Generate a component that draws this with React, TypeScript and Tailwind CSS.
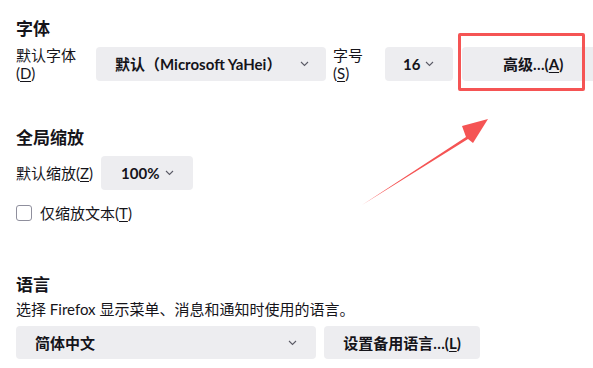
import React from 'react';

const FONT = 'Lato, "Noto Sans CJK SC", sans-serif';

// small thin dropdown chevron
const Chevron = ({ className = '' }: { className?: string }) => (
  <svg width="9" height="6" viewBox="0 0 9 6" className={className}>
    <polyline points="1,1 4.5,4.5 8,1" fill="none" stroke="#5b5b66" strokeWidth="1.1" />
  </svg>
);

const Key = ({ k }: { k: string }) => <span className="underline underline-offset-2">{k}</span>;

export default function App() {
  return (
    <div
      className="relative w-[593px] h-[368px] overflow-hidden bg-white text-[#15141a] text-[15px] leading-[22px]"
      style={{ fontFamily: FONT }}
    >
      <div className="flex flex-col pl-4 pt-[18px]">
        {/* 字体 */}
        <h2 className="text-[17px] font-bold leading-[22px]">字体</h2>
        <div className="mt-[7px] flex items-center h-[34px]">
          <div className="w-[64px] shrink-0 flex flex-col leading-[18px]">
            <span>默认字体</span>
            <span>(<Key k="D" />)</span>
          </div>
          <button className="ml-4 w-[230px] shrink-0 h-[34px] rounded-[4px] bg-[#ededf0] flex items-center pl-[19px] pr-[17px] font-bold whitespace-nowrap">
            <span className="flex-1 text-left">默认（Microsoft YaHei）</span>
            <Chevron />
          </button>
          <div className="ml-[7px] w-[52px] shrink-0 flex flex-col leading-[18px]">
            <span>字号</span>
            <span>(<Key k="S" />)</span>
          </div>
          <button className="w-[68px] shrink-0 h-[34px] rounded-[4px] bg-[#ededf0] flex items-center pl-[18px] font-bold gap-[5px]">
            <span>16</span>
            <Chevron />
          </button>
          <button className="ml-[9px] w-[150px] shrink-0 h-[34px] rounded-[4px] bg-[#ededf0] flex items-center pl-[41px] font-bold whitespace-nowrap">
            高级…(<Key k="A" />)
          </button>
        </div>

        {/* 全局缩放 */}
        <h2 className="mt-[46px] text-[17px] font-bold leading-[22px]">全局缩放</h2>
        <div className="mt-[7px] flex items-center h-[34px]">
          <span>默认缩放(<Key k="Z" />)</span>
          <button className="ml-[8px] w-[92px] h-[34px] rounded-[4px] bg-[#ededf0] flex items-center pl-[20px] gap-[6px] font-bold">
            <span>100%</span>
            <Chevron />
          </button>
        </div>
        <label className="mt-[12px] flex items-center h-[22px]">
          <span className="w-[16px] h-[16px] rounded-[3px] border border-[#8f8f9d] bg-white" />
          <span className="ml-[8px]">仅缩放文本(<Key k="T" />)</span>
        </label>

        {/* 语言 */}
        <h2 className="mt-[50px] text-[17px] font-bold leading-[22px]">语言</h2>
        <p className="mt-[2px]">选择 Firefox 显示菜单、消息和通知时使用的语言。</p>
        <div className="mt-[6px] flex items-center gap-2">
          <button className="w-[300px] h-[33px] rounded-[4px] bg-[#ededf0] flex items-center pl-[19px] pr-[19px] font-bold">
            <span className="flex-1 text-left">简体中文</span>
            <Chevron />
          </button>
          <button className="w-[156px] h-[33px] rounded-[4px] bg-[#ededf0] flex items-center justify-center font-bold whitespace-nowrap">
            设置备用语言…(<Key k="L" />)
          </button>
        </div>
      </div>

      {/* annotation: red box + arrow */}
      <div className="absolute left-[458px] top-[33px] w-[127px] h-[58px] border-[3px] border-[#f55454] rounded-[2px]" />
      <svg className="absolute left-0 top-0 pointer-events-none" width="593" height="368">
        <polygon points="362,205 466,137 462,126 488,119 473,143 468,139" fill="#f55454" />
      </svg>
    </div>
  );
}
